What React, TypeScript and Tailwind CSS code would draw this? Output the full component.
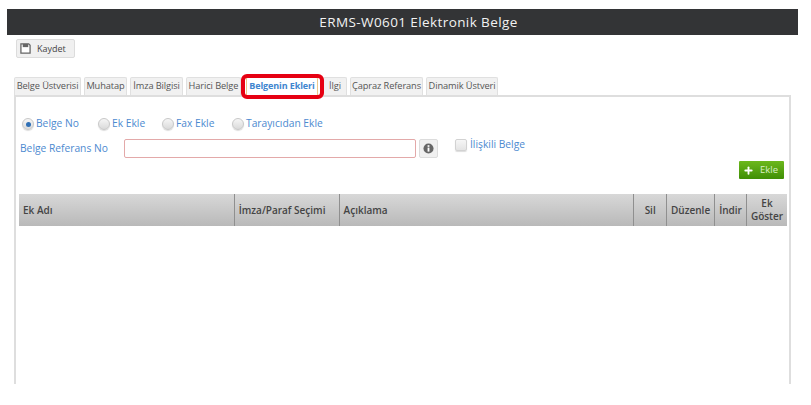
import { Plus } from "lucide-react";

const FONT = "font-['Open_Sans',sans-serif]";

const TABS = [
  { label: "Belge Üstverisi", w: "w-[67px]" },
  { label: "Muhatap", w: "w-[43px]" },
  { label: "İmza Bilgisi", w: "w-[53px]" },
  { label: "Harici Belge", w: "w-[55px]" },
  { label: "Belgenin Ekleri", w: "w-[70px]", active: true },
  { label: "İlgi", w: "w-[24px]" },
  { label: "Çapraz Referans", w: "w-[73px]" },
  { label: "Dinamik Üstveri", w: "w-[72px]" },
];

const COLUMNS = [
  { label: "Ek Adı", w: "w-[216px]", left: true },
  { label: "İmza/Paraf Seçimi", w: "w-[105px]", left: true },
  { label: "Açıklama", w: "w-[295px]", left: true },
  { label: "Sil", w: "w-[33px]" },
  { label: "Düzenle", w: "w-[48px]" },
  { label: "İndir", w: "w-[32px]" },
  { label: "Ek Göster", w: "w-[40px]" },
];

const RADIOS = [
  { label: "Belge No", w: "w-[76px]", checked: true },
  { label: "Ek Ekle", w: "w-[64px]" },
  { label: "Fax Ekle", w: "w-[70px]" },
  { label: "Tarayıcıdan Ekle", w: "w-auto" },
];

function Radio({ checked }: { checked?: boolean }) {
  return (
    <span className="flex h-[12px] w-[12px] shrink-0 items-center justify-center rounded-full border border-[#c8c8c8] bg-gradient-to-b from-[#f6f6f6] to-[#dadada] shadow-[0_1px_1px_#ddd]">
      {checked && <span className="h-[5px] w-[5px] rounded-full bg-[#2f6fb5]" />}
    </span>
  );
}

function FloppyIcon() {
  return (
    <svg width="11" height="11" viewBox="0 0 12 12" className="shrink-0">
      <path d="M1 1h8.5L11 2.5V11H1z" fill="#fff" stroke="#666" strokeWidth="1.4" />
      <rect x="3" y="1" width="6" height="3.5" fill="#666" />
    </svg>
  );
}

function InfoIcon() {
  return (
    <svg width="11" height="11" viewBox="0 0 12 12">
      <circle cx="6" cy="6" r="5.5" fill="#666" />
      <rect x="5" y="2.4" width="2" height="1.8" fill="#fff" />
      <rect x="5" y="5" width="2" height="4.4" fill="#fff" />
    </svg>
  );
}

export default function App() {
  return (
    <div className={`${FONT} h-[405px] w-[811px] overflow-hidden bg-white pt-[9px]`}>
      <div className="mx-[7px] flex h-[26px] w-[791px] items-center justify-center bg-[#333436] pl-[32px] text-[13.5px] tracking-[0.4px] text-[#f2f2f2]">
        ERMS-W0601 Elektronik Belge
      </div>

      <div className="ml-[16px] mt-[4px]">
        <button className="flex h-[19px] w-[59px] items-center gap-[6px] rounded-[2px] border border-[#dcdcdc] bg-[#f0f0f0] pl-[3px] text-[9px] text-[#444]">
          <FloppyIcon />
          Kaydet
        </button>
      </div>

      <div className="relative ml-[14px] mt-[19px] w-[777px]">
        <div className="flex h-[18px] gap-[3px]">
          {TABS.map((t) => (
            <div
              key={t.label}
              className={`flex ${t.w} items-center justify-center whitespace-nowrap rounded-t-[2px] border border-b-0 pb-[1px] tracking-[-0.1px] ${
                t.active
                  ? "mx-[3px] border-transparent bg-white text-[9px] font-bold text-[#3f86cf] outline outline-1 outline-[#ecc98a]"
                  : "border-[#e0e0e0] bg-[#f1f1f1] text-[9.25px] text-[#555]"
              }`}
            >
              {t.label}
            </div>
          ))}
        </div>
        <div className="absolute left-[227px] top-[-3px] h-[25px] w-[83px] rounded-[6px] border-[4px] border-[#e60012]" />

        <div className="h-[289px] border-x-2 border-t-2 border-[#dedede] px-[3px]">
          <div className="ml-[3px] mt-[20px] flex h-[14px] items-center text-[10.25px] text-[#4d8ad0]">
            {RADIOS.map((r) => (
              <label key={r.label} className={`flex ${r.w} items-center gap-[2px] whitespace-nowrap`}>
                <Radio checked={r.checked} />
                {r.label}
              </label>
            ))}
          </div>

          <div className="mt-[8px] flex items-start text-[10.25px] text-[#4d8ad0]">
            <span className="ml-[1px] mt-[2px] w-[104px] whitespace-nowrap">Belge Referans No</span>
            <div className="h-[19px] w-[292px] rounded-[2px] border border-[#e3a9a9] bg-white" />
            <button className="ml-[3px] flex h-[19px] w-[19px] items-center justify-center rounded-[2px] border border-[#dcdcdc] bg-[#f0f0f0]">
              <InfoIcon />
            </button>
            <label className="ml-[17px] -mt-[2px] flex items-center gap-[3px] whitespace-nowrap">
              <span className="h-[12px] w-[12px] rounded-[2px] border border-[#d2d2d2] bg-gradient-to-b from-[#f6f6f6] to-[#e4e4e4] shadow-[0_1px_1px_#ddd]" />
              İlişkili Belge
            </label>
          </div>

          <div className="mt-[3px] flex justify-end pr-[2px]">
            <button className="flex h-[18px] w-[45px] items-center gap-[6px] rounded-[1px] bg-gradient-to-b from-[#6cb81c] to-[#3f8f05] pl-[4px] text-[9.5px] text-[#d9efc4]">
              <Plus size={11} strokeWidth={4} className="text-white" />
              Ekle
            </button>
          </div>

          <div className="mt-[15px] flex h-[32px] w-[768px] bg-gradient-to-b from-[#d8d8d8] to-[#b9b9b9] text-[10px] font-semibold text-[#444]">
            {COLUMNS.map((c, i) => (
              <div
                key={c.label}
                className={`flex ${c.w} items-center leading-[13px] ${
                  c.left ? "pl-[4px]" : "justify-center text-center"
                } ${i < COLUMNS.length - 1 ? "border-r border-[#8f8f8f]" : ""}`}
              >
                {c.label}
              </div>
            ))}
          </div>
        </div>
      </div>
    </div>
  );
}
